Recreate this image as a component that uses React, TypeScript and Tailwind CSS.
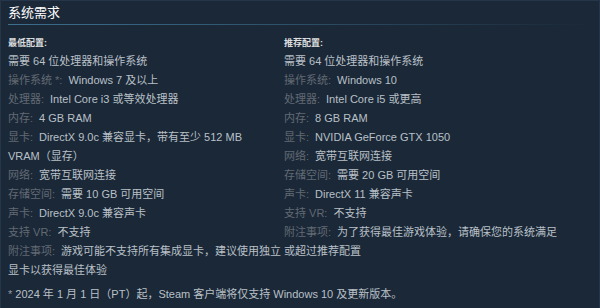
import React from "react";

type Item = { label?: string; value: React.ReactNode };

const left: Item[] = [
  { value: "需要 64 位处理器和操作系统" },
  { label: "操作系统 *:", value: "Windows 7 及以上" },
  { label: "处理器:", value: "Intel Core i3 或等效处理器" },
  { label: "内存:", value: "4 GB RAM" },
  {
    label: "显卡:",
    value: (
      <>
        DirectX 9.0c 兼容显卡，带有至少 512 MB <span className="whitespace-nowrap">VRAM（显存）</span>
      </>
    ),
  },
  { label: "网络:", value: "宽带互联网连接" },
  { label: "存储空间:", value: "需要 10 GB 可用空间" },
  { label: "声卡:", value: "DirectX 9.0c 兼容声卡" },
  { label: "支持 VR:", value: "不支持" },
  { label: "附注事项:", value: "游戏可能不支持所有集成显卡，建议使用独立显卡以获得最佳体验" },
];

const right: Item[] = [
  { value: "需要 64 位处理器和操作系统" },
  { label: "操作系统:", value: "Windows 10" },
  { label: "处理器:", value: "Intel Core i5 或更高" },
  { label: "内存:", value: "8 GB RAM" },
  { label: "显卡:", value: "NVIDIA GeForce GTX 1050" },
  { label: "网络:", value: "宽带互联网连接" },
  { label: "存储空间:", value: "需要 20 GB 可用空间" },
  { label: "声卡:", value: "DirectX 11 兼容声卡" },
  { label: "支持 VR:", value: "不支持" },
  { label: "附注事项:", value: "为了获得最佳游戏体验，请确保您的系统满足或超过推荐配置" },
];

function Column({ title, items, width }: { title: string; items: Item[]; width: string }) {
  return (
    <div className={`${width} shrink-0`}>
      <div className="text-[9px] leading-[18px] font-bold text-[#dcdedf]">{title}</div>
      <ul className="text-[11px] leading-[19px] text-[#b9c0c7]">
        {items.map((it, i) => (
          <li key={i}>
            {it.label && <span className="text-[#626a73] mr-[6px]">{it.label}</span>}
            {it.value}
          </li>
        ))}
      </ul>
    </div>
  );
}

export default function App() {
  return (
    <div className="w-[600px] h-[308px] overflow-hidden bg-[#1b2838] border-t border-x border-[#26364a] pl-[7px] pr-[7px] pt-[2px] font-['Liberation_Sans','Noto_Sans_CJK_SC',sans-serif]">
      <h2 className="text-[13px] leading-[19px] text-white font-normal">系统需求</h2>
      <div className="mt-[2px] h-px bg-[linear-gradient(to_right,#3c6e8e_0%,#2f5670_40%,rgba(27,40,56,0)_100%)]" />
      <div className="flex mt-[9px] gap-[2px]">
        <Column title="最低配置:" items={left} width="w-[274px]" />
        <Column title="推荐配置:" items={right} width="w-[276px]" />
      </div>
      <p className="mt-[5px] text-[11px] leading-[19px] text-[#b9c0c7]">
        <span className="text-[#8f98a0]">*</span> 2024 年 1 月 1 日（PT）起，Steam 客户端将仅支持 Windows 10 及更新版本。
      </p>
    </div>
  );
}
